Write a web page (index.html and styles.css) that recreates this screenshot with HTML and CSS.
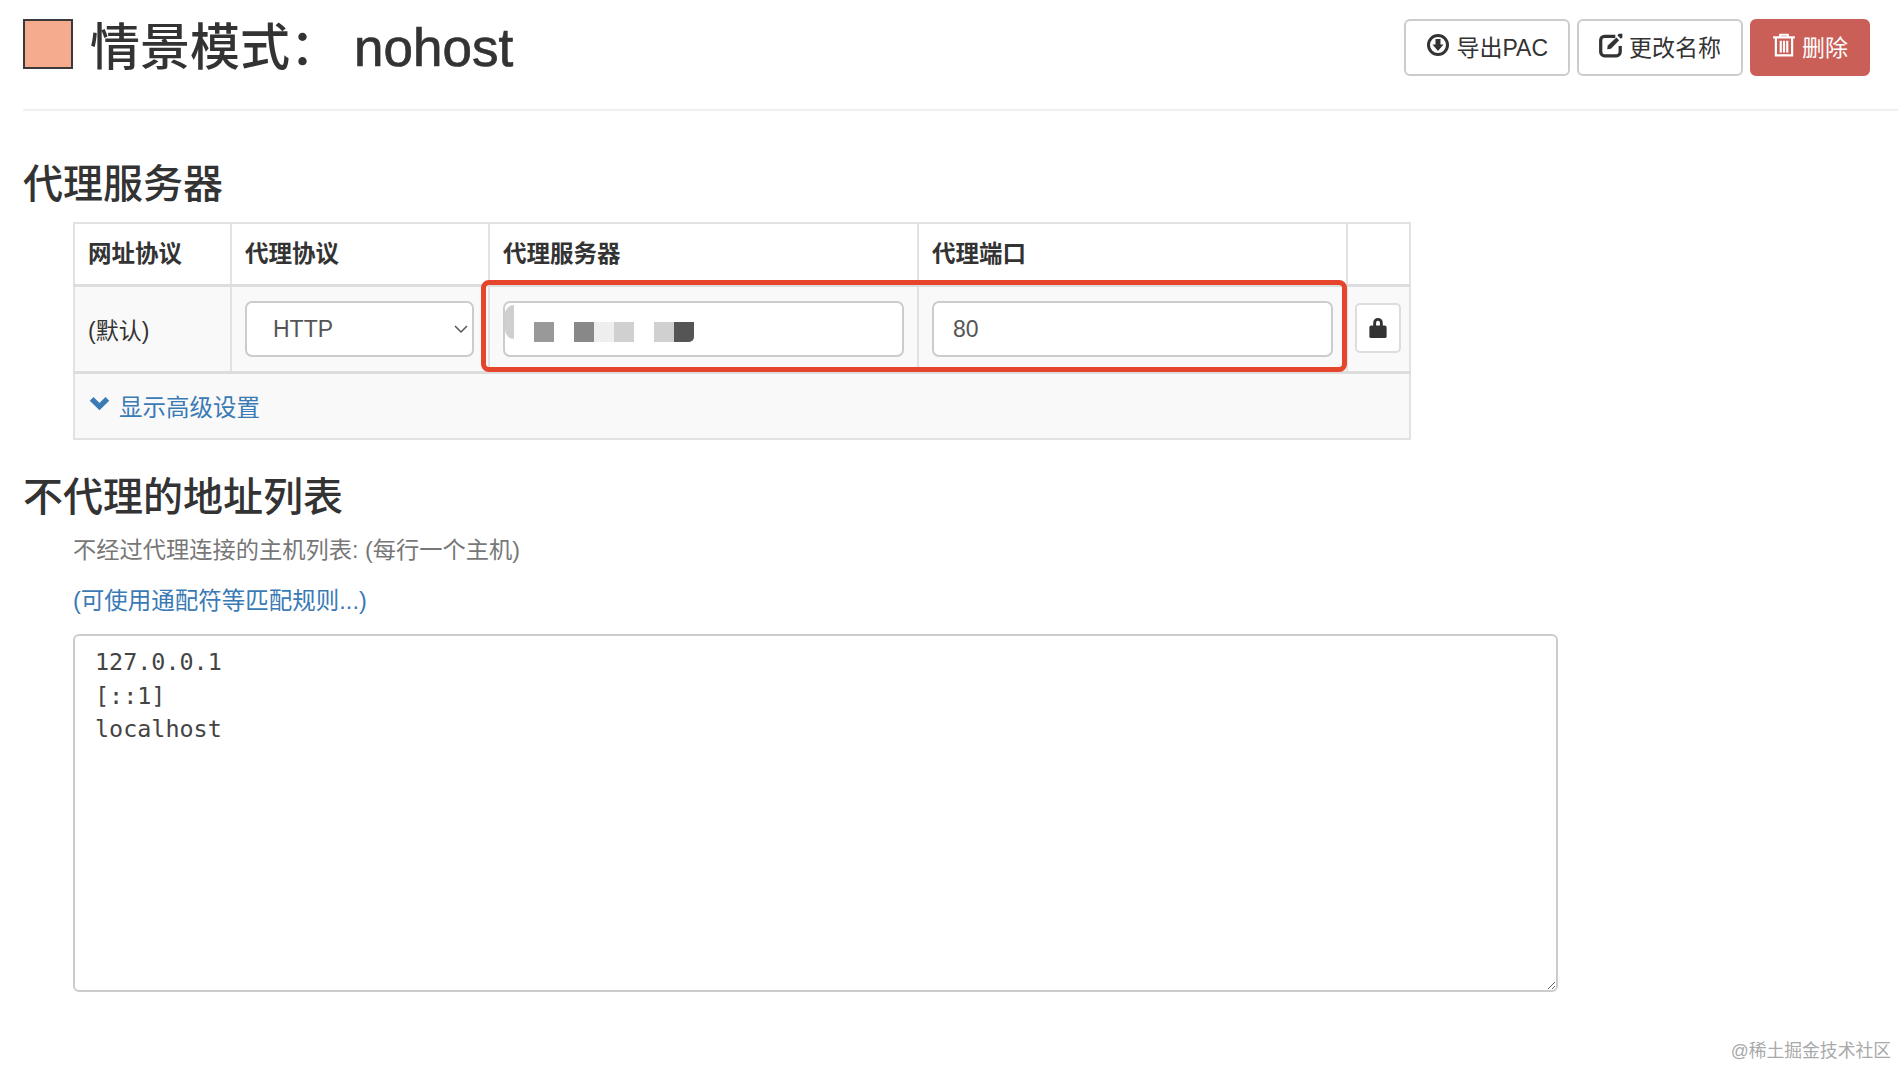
FILE: index.html
```html
<!DOCTYPE html>
<html lang="zh-CN">
<head>
  <meta charset="UTF-8">
  <title>情景模式: nohost</title>
  <link rel="stylesheet" href="styles.css">
</head>
<body>
  <div class="page">
    <header class="page-header">
      <h1 class="title"><span class="swatch"></span><span>情景模式：</span><span class="profile-name">nohost</span></h1>
      <div class="actions">
        <button class="btn">
          <svg class="icon" viewBox="0 0 24 24"><circle cx="12" cy="12" r="9.5" fill="none" stroke="currentColor" stroke-width="3"/><path d="M9.5 6h5v5.5h3L12 18l-5.5-6.500h3z" fill="currentColor"/></svg>
          导出PAC
        </button>
        <button class="btn">
          <svg class="icon icon-wide" viewBox="0 0 24 24"><path d="M16 4H6a3.500 3.500 0 0 0-3.500 3.500v11A3.500 3.500 0 0 0 6 22h11a3.500 3.500 0 0 0 3.500-3.500V13" fill="none" stroke="currentColor" stroke-width="3"/><path d="M9 12.500 17 5l2.500 2.500L12 15.500l-3.500.5z" fill="currentColor"/><path d="M19 1.500h3.500V5l-1.500 1.200-3-3z" fill="currentColor"/></svg>
          更改名称
        </button>
        <button class="btn btn-danger">
          <svg class="icon icon-wide" viewBox="0 0 24 24"><path d="M2 5h20M8.500 5V2.500h7V5" fill="none" stroke="currentColor" stroke-width="2"/><path d="M4.500 5.500v16h15v-16M9 8v11M12 8v11M15 8v11" fill="none" stroke="currentColor" stroke-width="2"/></svg>
          删除
        </button>
      </div>
    </header>

    <section class="section-proxy">
      <h3 class="section-title">代理服务器</h3>
      <div class="table-wrap">
        <table class="proxy-table">
          <colgroup>
            <col class="col-url"><col class="col-protocol"><col class="col-server"><col class="col-port"><col class="col-lock">
          </colgroup>
          <thead>
            <tr>
              <th>网址协议</th>
              <th>代理协议</th>
              <th>代理服务器</th>
              <th>代理端口</th>
              <th></th>
            </tr>
          </thead>
          <tbody>
            <tr>
              <td>(默认)</td>
              <td>
                <select class="field field-select">
                  <option>HTTP</option>
                </select>
              </td>
              <td>
                <div class="field field-masked">
                  <span class="mask-edge"></span>
                  <span class="mask-group">
                    <i class="m1"></i>
                    <i class="gap"></i>
                    <i class="m2"></i><i class="m3"></i><i class="m4"></i>
                    <i class="gap"></i>
                    <i class="m4"></i><i class="m5"></i>
                  </span>
                </div>
              </td>
              <td><input class="field" type="text" value="80"></td>
              <td>
                <button class="btn-lock">
                  <svg class="icon-lock" viewBox="0 0 20 24"><path d="M5 11V7a5 5 0 0 1 10 0v4h-3V7a2 2 0 0 0-4 0v4z" fill="currentColor"/><rect x="1" y="10" width="18" height="13" rx="2" fill="currentColor"/></svg>
                </button>
              </td>
            </tr>
          </tbody>
          <tfoot>
            <tr>
              <td colspan="5">
                <a class="link toggle" href="#">
                  <svg class="icon-chevron" viewBox="0 0 20 14"><path d="M2.500 2.500 10 10 17.500 2.500" fill="none" stroke="currentColor" stroke-width="5"/></svg>
                  显示高级设置
                </a>
              </td>
            </tr>
          </tfoot>
        </table>
        <div class="highlight"></div>
      </div>
    </section>

    <section class="section-bypass">
      <h3 class="section-title">不代理的地址列表</h3>
      <div class="bypass-body">
        <p class="help">不经过代理连接的主机列表: (每行一个主机)</p>
        <p class="help-link"><a class="link" href="#">(可使用通配符等匹配规则...)</a></p>
        <textarea class="bypass-list" spellcheck="false">127.0.0.1
[::1]
localhost</textarea>
      </div>
    </section>
  </div>
  <div class="watermark">@稀土掘金技术社区</div>
</body>
</html>
```

FILE: styles.css
```css
html, body {
  margin: 0;
  height: 100%;
  background: #fff;
  overflow: hidden;
}

body {
  font-family: "Liberation Sans", "Noto Sans CJK SC", sans-serif;
  font-size: 23px;
  color: #333;
}

.page {
  padding-left: 23px;
}

.page-header {
  display: flex;
  justify-content: space-between;
  align-items: flex-start;
  height: 111px;
  padding: 19px 28px 0 0;
  box-sizing: border-box;
  border-bottom: 2px solid #f0f0f0;
}

.title {
  display: flex;
  align-items: center;
  margin: 0;
  height: 58px;
  font-size: 50px;
  font-weight: 500;
  line-height: 58px;
}

.swatch {
  width: 50px;
  height: 50px;
  box-sizing: border-box;
  margin: -8px 17px 0 0;
  background: #f4ab8e;
  border: 2px solid #3a3a3a;
}

.profile-name {
  margin-left: 14px;
  font-size: 53px;
  -webkit-text-stroke: 0.7px #333;
}

.actions {
  display: flex;
  gap: 7px;
}

.btn {
  display: flex;
  align-items: center;
  justify-content: center;
  gap: 6px;
  height: 57px;
  padding: 0 20px 3px;
  background: #fff;
  color: #333;
  border: 2px solid #ccc;
  border-radius: 6px;
  font: inherit;
}

.btn-danger {
  background: #c95f57;
  border-color: #c95f57;
  color: #fff;
}

.icon {
  width: 24px;
  height: 24px;
  margin-top: -2px;
}

.icon-wide {
  width: 26px;
  height: 26px;
  margin: -3px -1px 0 -1px;
}

.section-title {
  margin: 0;
  font-size: 40px;
  font-weight: 500;
  line-height: 50px;
}

.section-proxy {
  padding-top: 48px;
}

.table-wrap {
  position: relative;
  width: 1336px;
  margin: 13px 0 0 50px;
}

.proxy-table {
  width: 100%;
  table-layout: fixed;
  border-collapse: collapse;
  border: 2px solid #e2e2e2;
}

.col-url { width: 157px; }
.col-protocol { width: 258px; }
.col-server { width: 429px; }
.col-port { width: 429px; }
.col-lock { width: 63px; }

.proxy-table th,
.proxy-table td {
  padding: 0 13px;
  text-align: left;
  border-right: 2px solid #e2e2e2;
}

.proxy-table th {
  height: 56px;
  padding-bottom: 4px;
  font-weight: 700;
  font-size: 23.500px;
  border-bottom: 3px solid #ddd;
}

.proxy-table tbody td {
  height: 82px;
  padding-top: 1px;
  padding-bottom: 1px;
  background: #f9f9f9;
  border-bottom: 3px solid #ddd;
}

.proxy-table tbody td:last-child {
  padding: 0 7px 2px;
}

.proxy-table tfoot td {
  height: 64px;
  background: #f9f9f9;
  border-right: 0;
}

.field {
  display: block;
  width: 100%;
  height: 56px;
  box-sizing: border-box;
  padding: 0 19px;
  background: #fff;
  color: #555;
  border: 2px solid #ccc;
  border-radius: 7px;
  font: inherit;
}

.field-select {
  width: 229px;
  padding-left: 26px;
  appearance: none;
  background-image: url("data:image/svg+xml,%3Csvg xmlns='http://www.w3.org/2000/svg' width='14' height='9'%3E%3Cpath d='M1 1l6 6 6-6' fill='none' stroke='%23555' stroke-width='1.500'/%3E%3C/svg%3E");
  background-repeat: no-repeat;
  background-position: right 4px center;
}

.field-masked {
  display: flex;
  align-items: center;
  padding: 0;
}

.mask-edge {
  width: 9px;
  height: 34px;
  margin-top: -15px;
  background: #cfcfcf;
  border-radius: 9px 0 0 9px;
}

.mask-group {
  display: flex;
  margin: 5px 0 0 20px;
}

.mask-group i {
  width: 20px;
  height: 20px;
}

.mask-group .gap { background: none; }
.m1 { background: #999; }
.m2 { background: #888; }
.m3 { background: #eee; }
.m4 { background: #d0d0d0; }
.m5 { background: #555; border-radius: 0 0 5px 0; }

.btn-lock {
  display: flex;
  align-items: center;
  justify-content: center;
  width: 46px;
  height: 50px;
  padding: 0;
  background: #fff;
  color: #333;
  border: 2px solid #ddd;
  border-radius: 5px;
}

.icon-lock {
  width: 20px;
  height: 23px;
  margin-top: -2px;
}

.link {
  color: #3a7ab5;
  text-decoration: none;
}

.toggle {
  display: flex;
  align-items: center;
  gap: 9px;
  margin-left: 1px;
  font-size: 23.500px;
}

.icon-chevron {
  width: 21px;
  height: 15px;
  margin-top: -5px;
}

/* red marker drawn over the server and port cells */
.highlight {
  position: absolute;
  left: 408px;
  top: 58px;
  width: 866px;
  height: 92px;
  box-sizing: border-box;
  border: 5px solid #e5442d;
  border-radius: 8px;
  pointer-events: none;
}

.section-bypass {
  padding-top: 32px;
}

.bypass-body {
  margin-left: 50px;
}

.help {
  margin: 12px 0 0;
  font-size: 23.250px;
  line-height: 33px;
  color: #777;
}

.help-link {
  margin: 18px 0 0;
  font-size: 23.500px;
  line-height: 33px;
}

.bypass-list {
  display: block;
  width: 1485px;
  height: 358px;
  box-sizing: border-box;
  margin-top: 16px;
  padding: 10px 20px;
  background: #fff;
  color: #444;
  border: 2px solid #ccc;
  border-radius: 6px;
  font-family: "DejaVu Sans Mono", monospace;
  font-size: 23.400px;
  line-height: 33.500px;
  outline: none;
}

.watermark {
  position: absolute;
  right: 7px;
  bottom: 6px;
  font-size: 17.800px;
  line-height: 22px;
  color: #a9a9a9;
}
```
